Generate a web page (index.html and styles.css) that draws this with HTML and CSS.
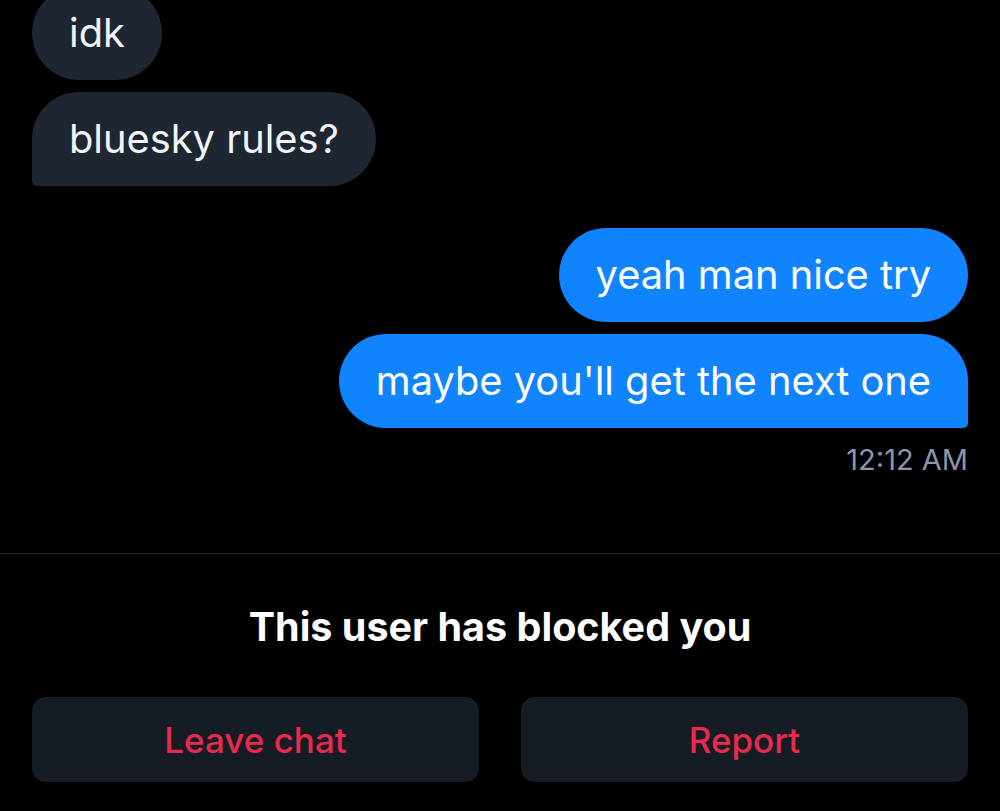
FILE: index.html
```html
<!DOCTYPE html>
<html lang="en">
<head>
    <meta charset="UTF-8">
    <meta name="viewport" content="width=device-width, initial-scale=1.0">
    <title>Chat</title>
    <link rel="stylesheet" href="styles.css">
</head>
<body>
    <div class="messages">
        <div class="group received">
            <div class="bubble">idk</div>
            <div class="bubble last">bluesky rules?</div>
        </div>

        <div class="group sent">
            <div class="bubble">yeah man nice try</div>
            <div class="bubble last">maybe you'll get the next one</div>
            <div class="timestamp">12:12 AM</div>
        </div>
    </div>

    <div class="blocked">
        <h2>This user has blocked you</h2>
        <div class="actions">
            <button class="action-btn">Leave chat</button>
            <button class="action-btn">Report</button>
        </div>
    </div>
</body>
</html>
```

FILE: styles.css
```css
* { margin: 0; padding: 0; box-sizing: border-box; }
body {
    font-family: Inter, 'Noto Sans', sans-serif;
    background: #000;
    color: #fff;
    width: 1000px;
    height: 811px;
    overflow: hidden;
}
.messages {
    padding: 0 32px;
    margin-top: -14px;
}
.group {
    display: flex;
    flex-direction: column;
    gap: 12px;
}
.group + .group {
    margin-top: 42px;
}
.received { align-items: flex-start; }
.sent { align-items: flex-end; }
.bubble {
    font-size: 39.8px;
    line-height: 46px;
    padding: 24px 37px;
    border-radius: 47px;
}
.received .bubble {
    background: #1e2631;
    color: #f1f3f5;
}
.sent .bubble {
    background: #1083fe;
    color: #fff;
}
.received .bubble.last { border-bottom-left-radius: 5px; }
.sent .bubble.last { border-bottom-right-radius: 5px; }
.timestamp {
    font-size: 29px;
    line-height: 34px;
    color: #8b97a7;
    margin-top: 3px;
}
.blocked {
    margin-top: 76px;
    border-top: 1px solid #1f2630;
    padding: 49px 32px 0;
}
.blocked h2 {
    text-align: center;
    font-size: 39.5px;
    line-height: 48px;
    font-weight: 700;
    margin-bottom: 46px;
}
.actions {
    display: grid;
    grid-template-columns: 1fr 1fr;
    gap: 42px;
}
.action-btn {
    height: 85px;
    border: none;
    border-radius: 14px;
    background: #161c24;
    color: #e9294d;
    font-family: Inter, 'Noto Sans', sans-serif;
    font-size: 35px;
    font-weight: 500;
    cursor: pointer;
}
```
